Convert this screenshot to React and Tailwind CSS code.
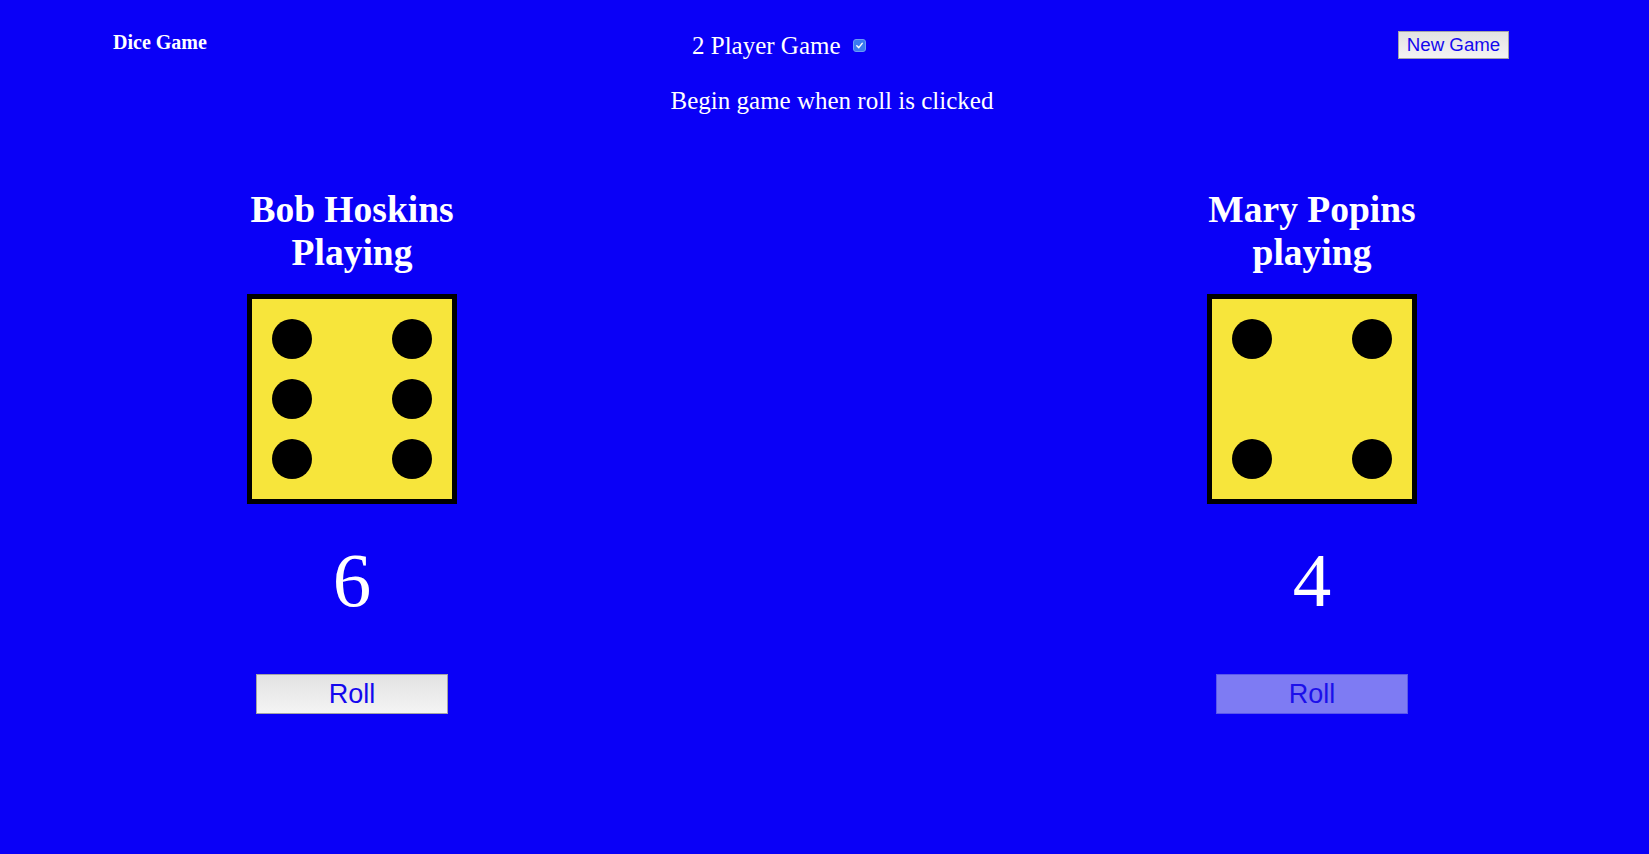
import React from "react";

const serif = { fontFamily: '"Liberation Serif", "Times New Roman", serif' };

function Dot() {
  return <div className="w-[40px] h-[40px] rounded-full bg-black" />;
}

function Row({ children }) {
  return <div className="flex justify-between">{children}</div>;
}

function Die({ value }) {
  return (
    <div className="w-[210px] h-[210px] border-[5px] border-black bg-[#f7e53b] p-[20px] flex flex-col justify-between">
      {value === 6 ? (
        <>
          <Row><Dot /><Dot /></Row>
          <Row><Dot /><Dot /></Row>
          <Row><Dot /><Dot /></Row>
        </>
      ) : (
        <>
          <Row><Dot /><Dot /></Row>
          <Row><Dot /><Dot /></Row>
        </>
      )}
    </div>
  );
}

function Player({ line1, line2, value, disabled }) {
  return (
    <div className="w-[260px] flex flex-col items-center">
      <h2 className="text-[37.5px] leading-[43px] font-bold text-white text-center whitespace-nowrap" style={serif}>
        {line1}
        <br />
        {line2}
      </h2>
      <div className="mt-[20px]">
        <Die value={value} />
      </div>
      <div className="mt-[32px] text-[77px] leading-[88px] text-white" style={serif}>
        {value}
      </div>
      <button
        className={
          disabled
            ? "mt-[50px] w-[192px] h-[40px] border border-[#5b57ec] bg-[#7e7bf3] text-[#1c10ea] text-[27px] leading-[38px] font-['Liberation_Sans',Arial,sans-serif]"
            : "mt-[50px] w-[192px] h-[40px] border border-[#a3a3a8] bg-gradient-to-b from-[#e2e2e2] to-[#f4f4f4] text-[#1408ee] text-[27px] leading-[38px] font-['Liberation_Sans',Arial,sans-serif]"
        }
      >
        Roll
      </button>
    </div>
  );
}

export default function App() {
  return (
    <div className="min-h-screen w-full bg-[#0a00f7] text-white">
      <div className="flex items-start pt-[30px] pl-[113px]">
        <div className="w-[579px] text-[20px] leading-[24px] font-bold" style={serif}>
          Dice Game
        </div>
        <div className="flex items-center h-[30px] mt-[1px]">
          <span className="text-[25px] leading-[30px]" style={serif}>
            2 Player Game
          </span>
          <span className="ml-[12px] -mt-[1px] w-[13px] h-[13px] rounded-[3px] bg-[#3a7cf0] border border-[#6a9cf5] flex items-center justify-center">
            <svg width="9" height="9" viewBox="0 0 10 10">
              <path d="M2 5.2 L4.2 7.4 L8 2.6" fill="none" stroke="white" strokeWidth="1.6" strokeLinecap="round" strokeLinejoin="round" />
            </svg>
          </span>
        </div>
        <button className="ml-auto mr-[140px] mt-[1px] w-[111px] h-[28px] border border-[#a3a3a8] bg-gradient-to-b from-[#e2e2e2] to-[#f4f4f4] text-[#1408ee] text-[18.7px] leading-[26px] font-['Liberation_Sans',Arial,sans-serif]">
          New Game
        </button>
      </div>
      <div className="mt-[25px] pl-[15px] text-center text-[25px] leading-[30px]" style={serif}>
        Begin game when roll is clicked
      </div>
      <div className="mt-[72px] pl-[15px]">
        <div className="flex justify-between px-[207px]">
          <Player line1="Bob Hoskins" line2="Playing" value={6} />
          <Player line1="Mary Popins" line2="playing" value={4} disabled />
        </div>
      </div>
    </div>
  );
}
